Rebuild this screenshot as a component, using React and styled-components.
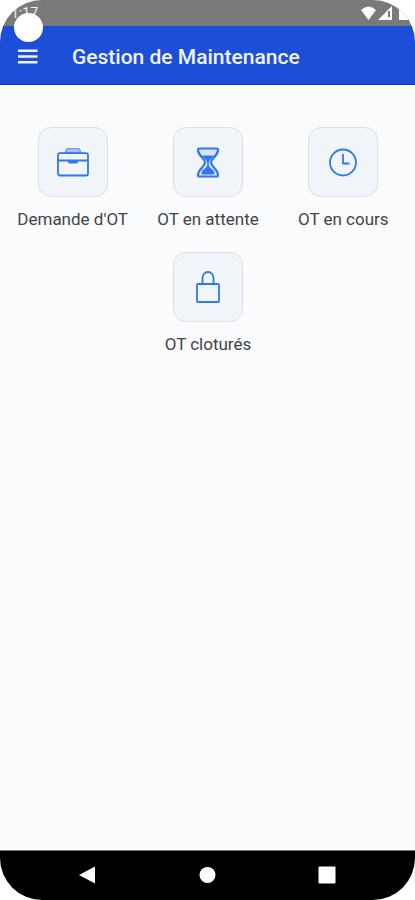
import styled, { createGlobalStyle } from "styled-components"

const GlobalStyle = createGlobalStyle`
  * {
    box-sizing: border-box;
  }
  body {
    margin: 0;
    background-color: white;
    font-family: Roboto, "Liberation Sans", sans-serif;
  }
`

const Phone = styled.div`
  position: relative;
  display: flex;
  flex-direction: column;
  min-height: 100vh;
  border-radius: 42px;
  overflow: hidden;
  background-color: #f9fbfd;
`

const StatusBar = styled.div`
  display: flex;
  align-items: center;
  justify-content: space-between;
  height: 26px;
  padding: 0 6px 0 11px;
  background-color: #7a7a7a;
`

const Time = styled.span`
  font-size: 14px;
  line-height: 26px;
  color: #eeeeee;
`

const StatusIcons = styled.div`
  display: flex;
  align-items: center;
  gap: 2px;
`

const Camera = styled.div`
  position: absolute;
  top: 13px;
  left: 14px;
  width: 29px;
  height: 29px;
  border-radius: 50%;
  background-color: white;
`

const Header = styled.header`
  display: flex;
  align-items: center;
  gap: 32px;
  height: 59px;
  padding: 3px 16px 0;
  background-color: #1d4ed8;
  border-bottom: 1px solid #0b30b4;
`

const MenuButton = styled.button`
  display: flex;
  padding: 0;
  border: none;
  background: none;
  color: #eef2ff;
  cursor: pointer;
`

const Title = styled.h1`
  margin: 0;
  font-size: 21px;
  font-weight: 500;
  line-height: 28px;
  color: #f1f4ff;
`

const Menu = styled.main`
  flex: 1;
  display: flex;
  flex-wrap: wrap;
  justify-content: center;
  align-content: flex-start;
  row-gap: 20px;
  padding: 42px 4px 42px 5px;
`

const Item = styled.button`
  display: flex;
  flex-direction: column;
  align-items: center;
  gap: 10px;
  width: 33.333%;
  padding: 0;
  border: none;
  background: none;
  font-family: inherit;
  cursor: pointer;
`

const Tile = styled.span`
  display: flex;
  align-items: center;
  justify-content: center;
  width: 70px;
  height: 70px;
  border: 1px solid #d9dfe5;
  border-radius: 13px;
  background-color: #f1f5f9;
  color: #2f78ee;
`

const Label = styled.span`
  font-size: 17px;
  line-height: 25px;
  white-space: nowrap;
  color: #444444;
`

const NavBar = styled.nav`
  display: flex;
  align-items: center;
  justify-content: space-around;
  height: 50px;
  padding: 0 28px 2px;
  border-top: 1px solid #777777;
  background-color: black;
`

const NavButton = styled.button`
  display: flex;
  padding: 0;
  border: none;
  background: none;
  color: white;
  cursor: pointer;
`

const Icon = ({ size = 36, children }) => (
  <svg
    width={size}
    height={size}
    viewBox={`0 0 ${size} ${size}`}
    fill="none"
    stroke="currentColor"
    strokeWidth="1.8"
    strokeLinejoin="round"
    aria-hidden="true"
  >
    {children}
  </svg>
)

const BriefcaseIcon = () => (
  <Icon>
    <path d="M10.5 8.5 Q11 4.7 13 4.7 H23 Q25 4.7 25.5 8.5 Z" fill="#b9c9f4" stroke="#7597ee" strokeWidth="1.4" />
    <rect x="3" y="9.2" width="30" height="22.3" rx="2" />
    <path d="M3 16.5 H33" strokeWidth="2" />
    <path d="M13 16.5 H23 V18 L22 19.5 H14 L13 18 Z" fill="currentColor" stroke="none" />
  </Icon>
)

const HourglassIcon = () => (
  <Icon>
    <path d="M9.5 4.5 H26.5 Q28.3 4.5 28 6.5 C27.2 12.5 21 14.5 21 18.5 C21 22.5 27.2 24.5 28 30.5 Q28.3 32.5 26.5 32.5 H9.5 Q7.7 32.5 8 30.5 C8.8 24.5 15 22.5 15 18.5 C15 14.5 8.8 12.5 8 6.5 Q7.7 4.5 9.5 4.5 Z" strokeWidth="2.2" fill="#dce6fb" />
    <path d="M12 11.5 H24 C22 14.5 18.8 16 18.8 19 V21.5 C18.8 23.5 24.5 26 24.5 29 Q24.5 30.5 23 30.5 H13 Q11.5 30.5 11.5 29 C11.5 26 17.2 23.5 17.2 21.5 V19 C17.2 16 14 14.5 12 11.5 Z" fill="currentColor" stroke="none" />
  </Icon>
)

const ClockIcon = () => (
  <Icon>
    <circle cx="18" cy="18.5" r="13" />
    <path d="M18 10 V19.5 H24.5" />
  </Icon>
)

const LockIcon = () => (
  <Icon>
    <rect x="7" y="15" width="22" height="18" rx="1" />
    <path d="M12.5 15 V9 A5.5 6 0 0 1 23.5 9 V15" />
  </Icon>
)

const items = [
  { label: "Demande d'OT", icon: <BriefcaseIcon /> },
  { label: "OT en attente", icon: <HourglassIcon /> },
  { label: "OT en cours", icon: <ClockIcon /> },
  { label: "OT cloturés", icon: <LockIcon /> },
]

const App = () => {
  return (
    <>
      <GlobalStyle />
      <Phone>
        <StatusBar>
          <Time>1:17</Time>
          <StatusIcons>
            <svg width="15" height="14" viewBox="0 0 15 14" fill="white" aria-hidden="true">
              <path d="M0 4 Q7.5 -3 15 4 L7.5 14 Z" />
            </svg>
            <svg width="14" height="14" viewBox="0 0 14 14" aria-hidden="true">
              <path d="M14 0 V14 H0 Z" fill="white" />
              <path d="M11 5 V11" stroke="#7a7a7a" strokeWidth="2" />
            </svg>
            <svg width="15" height="14" viewBox="0 0 15 14" fill="white" aria-hidden="true">
              <path d="M5 2 H7 V0 H11 V2 H14 V14 H5 Z" />
            </svg>
          </StatusIcons>
        </StatusBar>
        <Header>
          <MenuButton aria-label="Menu">
            <svg width="24" height="24" viewBox="0 0 24 24" fill="currentColor" aria-hidden="true">
              <path d="M2 4.6 H21.5 V7 H2 Z M2 10.3 H21.5 V12.7 H2 Z M2 16 H21.5 V18.4 H2 Z" />
            </svg>
          </MenuButton>
          <Title>Gestion de Maintenance</Title>
        </Header>
        <Menu>
          {items.map((item) => (
            <Item key={item.label}>
              <Tile>{item.icon}</Tile>
              <Label>{item.label}</Label>
            </Item>
          ))}
        </Menu>
        <NavBar>
          <NavButton aria-label="Retour">
            <svg width="18" height="18" viewBox="0 0 18 18" fill="currentColor" aria-hidden="true">
              <path d="M0 9 L16 0.5 V17.5 Z" />
            </svg>
          </NavButton>
          <NavButton aria-label="Accueil">
            <svg width="18" height="18" viewBox="0 0 18 18" fill="currentColor" aria-hidden="true">
              <circle cx="9.5" cy="9" r="8" />
            </svg>
          </NavButton>
          <NavButton aria-label="Applications">
            <svg width="18" height="18" viewBox="0 0 18 18" fill="currentColor" aria-hidden="true">
              <rect x="0.5" y="0.5" width="17" height="17" rx="1" />
            </svg>
          </NavButton>
        </NavBar>
        <Camera />
      </Phone>
    </>
  )
}

export default App
